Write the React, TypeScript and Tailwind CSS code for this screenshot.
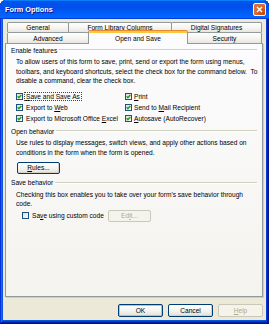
import React from "react";

function Box({ checked }: { checked: boolean }) {
  return (
    <svg width="7" height="7" viewBox="0 0 7 7" className="shrink-0">
      <defs>
        <linearGradient id="cbg" x1="0" y1="0" x2="1" y2="1">
          <stop offset="0" stopColor="#dcdcd7" />
          <stop offset="1" stopColor="#ffffff" />
        </linearGradient>
      </defs>
      <rect x="0.5" y="0.5" width="6" height="6" fill="url(#cbg)" stroke="#1c5180" strokeWidth="1" />
      {checked && (
        <path d="M1.6 3.2 L2.9 4.6 L5.4 1.9" fill="none" stroke="#21a121" strokeWidth="1.4" />
      )}
    </svg>
  );
}

function U({ children }: { children: React.ReactNode }) {
  return <span className="underline underline-offset-[1px]">{children}</span>;
}

function Btn({
  children,
  w,
  disabled,
  def,
}: {
  children: React.ReactNode;
  w: string;
  disabled?: boolean;
  def?: boolean;
}) {
  if (disabled) {
    return (
      <div
        className={`${w} h-full flex items-center justify-center rounded-[2px] border border-[#c9c7ba] bg-[#f5f4ea] text-[#aca899]`}
      >
        {children}
      </div>
    );
  }
  return (
    <div
      className={`${w} h-full flex items-center justify-center rounded-[2px] border border-[#003c74] bg-[linear-gradient(180deg,#ffffff,#f3f3ef_55%,#e2dfd6)] text-black ${
        def ? "shadow-[inset_0_0_0_1px_#a6c1f2]" : "shadow-[inset_-1px_-1px_0_#d6d0c5]"
      }`}
    >
      {children}
    </div>
  );
}

function GroupLabel({ children, mt }: { children: React.ReactNode; mt: string }) {
  return (
    <div className={`flex items-center h-[8px] ${mt}`}>
      <span className="whitespace-nowrap">{children}</span>
      <div className="flex-1 ml-[2px] h-[2px] border-t border-t-[#d0d0bf] border-b border-b-white" />
    </div>
  );
}

function Tab({ children, cls }: { children: React.ReactNode; cls: string }) {
  return (
    <div
      className={`${cls} shrink-0 flex items-center justify-center border border-b-0 border-[#919b9c] rounded-t-[2px] bg-[linear-gradient(180deg,#ffffff,#f4f3ef_60%,#e7e5dd)] whitespace-nowrap`}
    >
      {children}
    </div>
  );
}

export default function App() {
  return (
    <div className="w-[269px] h-[324px] flex flex-col rounded-t-[6px] overflow-hidden bg-[#0855dd] shadow-[inset_-1px_-1px_#00138c,inset_1px_1px_#0831d9,inset_-2px_-2px_#001ea0,inset_2px_2px_#166aee,inset_-3px_-3px_#003bda,inset_3px_3px_#0855dd] [font-family:'Liberation_Sans',Arial,sans-serif] text-[6.6px] leading-[7px] text-black">
      {/* Title bar */}
      <div className="h-[19px] shrink-0 flex items-center justify-between pl-[5px] pr-[3px] bg-[linear-gradient(180deg,#0997ff,#0053ee_8%,#0050ee_40%,#06f_88%,#06f_93%,#005bff_95%,#003dd7_96%,#003dd7)]">
        <span className="text-white font-bold text-[7.3px] [text-shadow:1px_1px_#0f1089]">Form Options</span>
        <div className="w-[13px] h-[13px] rounded-[2px] border border-white bg-[radial-gradient(circle_at_90%_90%,#cc4600_0%,#dc6527_55%,#cd7546_70%,#e66a3a)] flex items-center justify-center">
          <svg width="7" height="7" viewBox="0 0 7 7">
            <path d="M1 1 L6 6 M6 1 L1 6" stroke="#ffffff" strokeWidth="1.4" />
          </svg>
        </div>
      </div>

      {/* Body */}
      <div className="flex-1 mx-[3px] mb-[4px] bg-[#ece9d8] flex flex-col">
        {/* Tabs row 1 */}
        <div className="flex pl-[4px] pt-[3px]">
          <Tab cls="w-[62px] h-[10px]">General</Tab>
          <Tab cls="w-[104px] h-[10px] -ml-px">Form Library Columns</Tab>
          <Tab cls="w-[91px] h-[10px] -ml-px">Digital Signatures</Tab>
        </div>
        {/* Tabs row 2 */}
        <div className="flex items-end pl-[4px] -mt-[2px]">
          <Tab cls="w-[82px] h-[11px]">Advanced</Tab>
          <div className="w-[100px] h-[14px] -ml-px -mb-px relative z-10 flex items-center justify-center pt-[1px] border border-b-0 border-[#919b9c] border-t-[#e68b2c] rounded-t-[2px] bg-[#fcfcfe] shadow-[inset_0_2px_0_#ffc73c] whitespace-nowrap">
            Open and Save
          </div>
          <Tab cls="w-[75px] h-[11px] -ml-px">Security</Tab>
        </div>

        {/* Panel */}
        <div className="flex-1 ml-[2px] mr-[3px] border border-[#919b9c] bg-[linear-gradient(180deg,#fcfcfe,#f4f3ee)] shadow-[1px_1px_0_#d0cebf] flex flex-col px-[5px]">
          <GroupLabel mt="mt-[2px]">Enable features</GroupLabel>
          <div className="ml-[5px] mt-[3px] whitespace-pre leading-[9.5px]">
            <div>To allow users of this form to save, print, send or export the form using menus,</div>
            <div>toolbars, and keyboard shortcuts, select the check box for the command below.  To</div>
            <div>disable a command, clear the check box.</div>
          </div>
          <div className="ml-[5px] mt-[5px] grid grid-cols-[109px_1fr]">
            <div className="h-[11px] flex items-center gap-[3px]">
              <Box checked />
              <span className="outline outline-1 outline-dotted outline-[#444] leading-[7px] px-[1px] -ml-[1px]">
                <U>S</U>ave and Save As
              </span>
            </div>
            <div className="h-[11px] flex items-center gap-[2px]">
              <Box checked />
              <span>
                <U>P</U>rint
              </span>
            </div>
            <div className="h-[11px] flex items-center gap-[3px]">
              <Box checked />
              <span>
                Export to <U>W</U>eb
              </span>
            </div>
            <div className="h-[11px] flex items-center gap-[2px]">
              <Box checked />
              <span>
                Send to <U>M</U>ail Recipient
              </span>
            </div>
            <div className="h-[11px] flex items-center gap-[3px]">
              <Box checked />
              <span>
                Export to Microsoft Office <U>E</U>xcel
              </span>
            </div>
            <div className="h-[11px] flex items-center gap-[2px]">
              <Box checked />
              <span>
                <U>A</U>utosave (AutoRecover)
              </span>
            </div>
          </div>

          <GroupLabel mt="mt-[3.5px]">Open behavior</GroupLabel>
          <div className="ml-[5px] mt-[3px] whitespace-pre leading-[9.5px]">
            <div>Use rules to display messages, switch views, and apply other actions based on</div>
            <div>conditions in the form when the form is opened.</div>
          </div>
          <div className="ml-[6px] mt-[4.5px] h-[12px] flex">
            <Btn w="w-[43px]">
              <span>
                <U>R</U>ules...
              </span>
            </Btn>
          </div>

          <GroupLabel mt="mt-[5px]">Save behavior</GroupLabel>
          <div className="ml-[5px] mt-[3px] whitespace-pre leading-[9.5px]">
            <div>Checking this box enables you to take over your form's save behavior through</div>
            <div>code.</div>
          </div>
          <div className="mt-[1px] h-[12px] grid grid-cols-[97px_auto]">
            <div className="pl-[11px] flex items-center gap-[3px]">
              <Box checked={false} />
              <span>
                Sa<U>v</U>e using custom code
              </span>
            </div>
            <div className="h-full flex">
              <Btn w="w-[43px]" disabled>
                <span>
                  Ed<U>i</U>t...
                </span>
              </Btn>
            </div>
          </div>
        </div>

        {/* Buttons */}
        <div className="h-[13px] mt-[7px] mb-[3px] mr-[3px] flex justify-end gap-[5px]">
          <Btn w="w-[45px]" def>
            OK
          </Btn>
          <Btn w="w-[45px]">Cancel</Btn>
          <Btn w="w-[45px]" disabled>
            <span>
              <U>H</U>elp
            </span>
          </Btn>
        </div>
      </div>
    </div>
  );
}
